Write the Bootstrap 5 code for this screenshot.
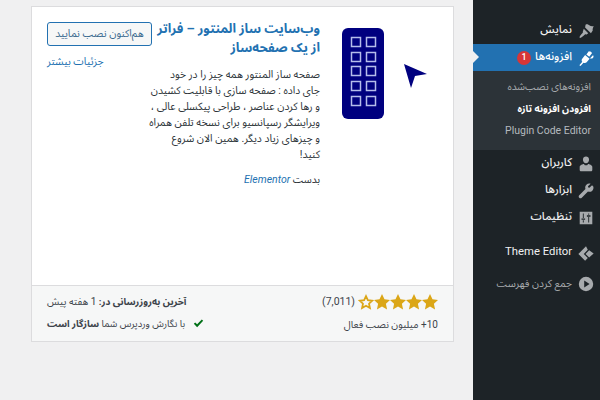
<!DOCTYPE html>
<html lang="fa" dir="rtl">
<head>
<meta charset="UTF-8">
<title>افزودن افزونه</title>
<link rel="stylesheet" href="https://cdn.jsdelivr.net/npm/bootstrap@5.3.0/dist/css/bootstrap.min.css">
<style>
html, body { height: 100%; overflow: hidden; }
body { font-family: Roboto, "Noto Sans Arabic", "DejaVu Sans", sans-serif; background: #f0f0f1; color: #3c434a; font-size: 10px; }
.wp-shell { width: 600px; height: 400px; }
.wp-side { width: 127px; background: #1d2327; color: #f0f0f1; padding-top: 17px; flex-shrink: 0; }
.wp-item { height: 27px; padding-right: 5px; gap: 5px; font-size: 11.3px; font-weight: 500; }
.wp-item svg { width: 18px; height: 18px; fill: #a7aaad; flex-shrink: 0; }
.wp-item.now { background: #2271b1; color: #fff; position: relative; gap: 4px; }
.wp-item.now svg { fill: #fff; margin-left: 1px; }
.wp-item.now::after { content: ""; position: absolute; left: 0; top: 7px; border: 6px solid transparent; border-left-color: #f0f0f1; }
.wp-bubble { width: 14px; height: 14px; border-radius: 50%; background: #d63638; color: #fff; font-size: 9px; }
.wp-sub { background: #2c3338; height: 79px; padding: 5px 9px 0 0; font-size: 10.2px; color: #b4b9be; }
.wp-sub div { height: 22px; line-height: 22px; }
.wp-sub .on { color: #fff; font-weight: 700; font-size: 9.7px; }
.wp-sub .latin { font-size: 10.5px; text-align: right; }
.wp-muted { color: #a7aaad; font-weight: 400; }
.wp-collapse { font-size: 10.3px; font-weight: 400; color: #a7aaad; }
.wp-latin-item { font-size: 11.3px; font-weight: 400; }
.wp-main { padding: 6px 19px 0 31px; }
.wp-card { width: 423px; height: 336px; background: #fff; border: 1px solid #dcdcde; }
.wp-top { height: 278px; padding: 13px 15px 0 15px; }
.wp-logo { width: 108px; flex-shrink: 0; }
.wp-logo svg { display: block; }
.wp-info { width: 167px; flex-shrink: 0; margin-right: 10px; }
.wp-title { font-size: 13px; font-weight: 700; line-height: 19px; color: #2271b1; margin: -1.5px 0 0 0; white-space: nowrap; }
.wp-actions { width: 105px; padding-top: 2px; margin-right: 1px; }
.wp-install { font-size: 10.5px; color: #3b6a8f; border: 1px solid #2271b1; background: #f6f7f7; border-radius: 3px; height: 24px; width: 105px; padding: 0; }
.wp-more { color: #2271b1; text-decoration: none; font-size: 10.5px; }
.wp-desc { font-size: 10.5px; line-height: 16px; margin: 10px 0 0 0; color: #2c3338; white-space: nowrap; }
.wp-by { font-size: 10.2px; margin: 9px 0 0 0; color: #2c3338; }
.wp-by a { color: #2271b1; font-style: italic; font-size: 10.5px; text-decoration: none; }
.wp-foot { height: 56px; background: #f6f7f7; border-top: 1px solid #dcdcde; padding: 5px 15px 0 15px; }
.wp-foot .fr { height: 22px; }
.wp-small { font-size: 9.6px; }
.wp-stars svg { width: 16px; height: 16px; display: block; }
.wp-count { font-size: 10.5px; margin-right: 3px; }
.wp-tick { width: 11px; height: 11px; }
</style>
</head>
<body>
<div class="wp-shell d-flex">
  <aside class="wp-side">
    <div class="wp-item d-flex align-items-center">
      <svg viewBox="0 0 20 20"><path d="M9.500 3c1.500-1 3.500 0 4.500 1 1 .8 3 1 4.500.5-.3 1.500-1.500 3-1 5l-2 3L9 6zM7.500 7.500l5 5-1.500 1.200c-.5.300-1.300.2-1.800 0l-.7.5c-.8.8-4.500 4.300-5.500 3.300s2.500-4.500 3.300-5.500l.3-.6c-.2-.5-.3-1.200.2-1.700z"/></svg>
      <span>نمایش</span>
    </div>
    <div class="wp-item now d-flex align-items-center">
      <svg viewBox="0 0 20 20"><path d="M13.100 2.500 10.400 6l3.200 2.600 2.800-3.500c.6-.8-.1-1.300-.5-1.600-.2-.2-1-.9-1.500-.6zM17.800 7l-.1 0-3.400 3.500 2.400 0c1-.1 1.300-1 1.500-1.400.2-.6.300-1.500-.4-2.100zM9 6.800 5.800 10.700c-.9 1.100-.8 2.500.1 3.500l-3.300 3.800 1.300 1 3.300-3.800c1.200.6 2.600.5 3.500-.5l3.300-3.800z"/></svg>
      <span>افزونه‌ها</span>
      <span class="wp-bubble d-flex align-items-center justify-content-center">1</span>
    </div>
    <div class="wp-sub">
      <div class="wp-muted">افزونه‌های نصب‌شده</div>
      <div class="on">افزودن افزونه تازه</div>
      <div class="latin" dir="ltr">Plugin Code Editor</div>
    </div>
    <div class="wp-item d-flex align-items-center">
      <svg viewBox="0 0 20 20"><path d="M10 9.300c1.900 0 3.400-1.900 3.400-4s-1.500-3.500-3.400-3.500-3.400 1.400-3.400 3.500 1.500 4 3.400 4zM3 16.600V13c0-1.700 3.500-3 4.700-3l1 1.500h2.600l1-1.500c1.200 0 4.700 1.300 4.700 3v3.600c0 .8-.7 1.400-1.500 1.400h-11c-.8 0-1.500-.6-1.500-1.400z"/></svg>
      <span>کاربران</span>
    </div>
    <div class="wp-item d-flex align-items-center">
      <svg viewBox="0 0 20 20"><path d="M16.700 3.500 13.800 6.400l-1.300-.3-.3-1.300 2.900-2.900c-1.600-.5-3.500-.1-4.700 1.100-1.300 1.300-1.600 3.200-1 4.800l-6.900 6.900c-.8.800-.8 2 0 2.800.8.800 2 .8 2.800 0l6.900-6.900c1.600.6 3.500.3 4.800-1 1.200-1.200 1.600-3.100 1.100-4.700z"/></svg>
      <span>ابزارها</span>
    </div>
    <div class="wp-item d-flex align-items-center">
      <svg viewBox="0 0 20 20"><path fill-rule="evenodd" d="M3 3h14v14H3zM6.500 5h1v5h-1zM5 10.500h4V12H5zM6.500 12.500h1V15h-1zM12.500 5h1v1.500h-1zM11 7h4v1.500h-4zM12.500 9h1v6h-1z"/></svg>
      <span>تنظیمات</span>
    </div>
    <div class="wp-item d-flex align-items-center mt-2">
      <svg viewBox="0 0 20 20"><path d="M10 2.500 1.500 11 9 18.500l3-3-4.500-4.500L12 6.500zM13.500 7 9.500 11l4 4 5-4.500z"/></svg>
      <span class="wp-latin-item">Theme Editor</span>
    </div>
    <div class="wp-item wp-collapse d-flex align-items-center mt-1">
      <svg viewBox="0 0 20 20"><path d="M10 2a8 8 0 1 0 0 16 8 8 0 0 0 0-16zM8 14V6l6 4z"/></svg>
      <span>جمع کردن فهرست</span>
    </div>
  </aside>

  <main class="wp-main">
    <div class="wp-card d-flex flex-column">
      <div class="wp-top d-flex">
        <div class="wp-logo">
          <svg width="108" height="100" viewBox="0 0 108 100">
            <rect x="12" y="8" width="42" height="91" rx="6" fill="#00007f"/>
            <g fill="none" stroke="#b5bdeb" stroke-width="1.500">
              <rect x="21.500" y="17.500" width="9" height="9"/><rect x="36.500" y="17.500" width="9" height="9"/>
              <rect x="21.500" y="32.500" width="9" height="9"/><rect x="36.500" y="32.500" width="9" height="9"/>
              <rect x="21.500" y="46.500" width="9" height="9"/><rect x="36.500" y="46.500" width="9" height="9"/>
              <rect x="21.500" y="61.500" width="9" height="9"/><rect x="36.500" y="61.500" width="9" height="9"/>
              <rect x="21.500" y="76.500" width="9" height="9"/><rect x="36.500" y="76.500" width="9" height="9"/>
            </g>
            <path d="M74 44 97 54 85 56 81 68z" fill="#00007f"/>
          </svg>
        </div>
        <div class="wp-info">
          <h3 class="wp-title">وب‌سایت ساز المنتور – فراتر<br>از یک صفحه‌ساز</h3>
          <p class="wp-desc">صفحه ساز المنتور همه چیز را در خود<br>جای داده : صفحه سازی با قابلیت کشیدن<br>و رها کردن عناصر ، طراحی پیکسلی عالی ،<br>ویرایشگر رسپانسیو برای نسخه تلفن همراه<br>و چیزهای زیاد دیگر. همین الان شروع<br>کنید!</p>
          <p class="wp-by">بدست <a href="#">Elementor</a></p>
        </div>
        <div class="wp-actions d-flex flex-column align-items-end gap-2">
          <button class="wp-install btn" type="button">هم‌اکنون نصب نمایید</button>
          <a class="wp-more" href="#">جزئیات بیشتر</a>
        </div>
      </div>
      <div class="wp-foot">
        <div class="fr d-flex justify-content-between align-items-center">
          <div class="wp-stars d-flex align-items-center">
            <svg viewBox="1 1 18 18"><path fill="#dba617" d="m10 1 2.800 6 6.200.7-4.600 4.300 1.300 6.500L10 15.200l-5.700 3.300L5.600 12 1 7.700 7.200 7z"/></svg>
            <svg viewBox="1 1 18 18"><path fill="#dba617" d="m10 1 2.800 6 6.200.7-4.600 4.300 1.300 6.500L10 15.200l-5.700 3.300L5.600 12 1 7.700 7.200 7z"/></svg>
            <svg viewBox="1 1 18 18"><path fill="#dba617" d="m10 1 2.800 6 6.200.7-4.600 4.300 1.300 6.500L10 15.200l-5.700 3.300L5.600 12 1 7.700 7.200 7z"/></svg>
            <svg viewBox="1 1 18 18"><path fill="#dba617" d="m10 1 2.800 6 6.200.7-4.600 4.300 1.300 6.500L10 15.200l-5.700 3.300L5.600 12 1 7.700 7.200 7z"/></svg>
            <svg viewBox="1 1 18 18"><path fill="none" stroke="#dba617" stroke-width="2" d="m10 3.500 2.100 4.500 4.800.6-3.500 3.300 1 4.900L10 14.300l-4.400 2.500 1-4.900-3.500-3.300 4.800-.6z"/></svg>
            <span class="wp-count" dir="ltr">(7,011)</span>
          </div>
          <div><b class="wp-small">آخرین به‌روزرسانی در:</b> 1 هفته پیش</div>
        </div>
        <div class="fr d-flex justify-content-between align-items-center">
          <div>10+ میلیون نصب فعال</div>
          <div class="d-flex align-items-center gap-2">
            <svg class="wp-tick" viewBox="0 0 20 20"><path fill="#007017" d="M7.500 17 1.500 10.500l2.500-2.500 3.500 3.500 8.500-9 2.500 2.500z"/></svg>
            <span class="wp-small">با نگارش وردپرس شما <b>سازگار است</b></span>
          </div>
        </div>
      </div>
    </div>
  </main>
</div>
</body>
</html>
